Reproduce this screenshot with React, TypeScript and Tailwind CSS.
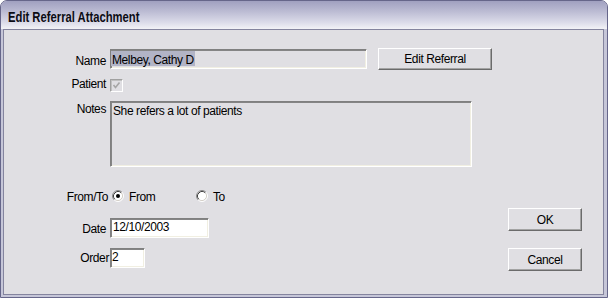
import React from "react";

const sunken =
  "border border-t-[#808080] border-l-[#808080] border-b-white border-r-white shadow-[inset_1px_1px_0_#858585,inset_-1px_-1px_0_#f1efe2]";
const raised =
  "border border-t-white border-l-white border-b-[#6b6b6b] border-r-[#6b6b6b] shadow-[inset_-1px_-1px_0_#a3a3a3] bg-[#e0dfe3] flex items-center justify-center";

function Radio({ checked }: { checked?: boolean }) {
  return (
    <svg width="12" height="12" viewBox="0 0 12 12" className="shrink-0">
      <circle cx="6" cy="6" r="4.6" fill="#ffffff" />
      <path d="M2.11 9.89 A5.5 5.5 0 0 1 9.89 2.11" fill="none" stroke="#8a8a8a" strokeWidth="1" />
      <path d="M9.89 2.11 A5.5 5.5 0 0 1 2.11 9.89" fill="none" stroke="#ffffff" strokeWidth="1" />
      <path d="M2.82 9.18 A4.5 4.5 0 0 1 9.18 2.82" fill="none" stroke="#404040" strokeWidth="1" />
      <path d="M9.18 2.82 A4.5 4.5 0 0 1 2.82 9.18" fill="none" stroke="#d4d0c8" strokeWidth="1" />
      {checked && <circle cx="6" cy="6" r="2" fill="#000000" />}
    </svg>
  );
}

export default function App() {
  return (
    <div className="w-[608px] h-[298px] bg-white font-['Liberation_Sans',Arial,sans-serif] text-[12px] leading-[14px] tracking-[-0.4px] text-black">
      <div className="w-[608px] h-[298px] rounded-t-[7px] border border-[#66668a] bg-[#c6c6d8] flex flex-col overflow-hidden">
        <div className="h-[28px] shrink-0 bg-[linear-gradient(to_bottom,#a0a0c0_0%,#babad2_35%,#dadae8_75%,#f2f2f6_100%)] pl-[7px] pt-[8px]">
          <span className="inline-block origin-left scale-x-[0.75] font-bold text-[15px] leading-[16px] tracking-[0px] text-[#0c0c14] whitespace-nowrap">
            Edit Referral Attachment
          </span>
        </div>
        <div className="flex-1 ml-[2px] mr-[3px] mb-[2px] border border-[#84849e] bg-[#e0dfe3] flex flex-col pt-[18px]">
          {/* Name row */}
          <div className="flex items-start h-[22px]">
            <div className="w-[102px] text-right pt-[6px]">Name</div>
            <div className={`ml-[4px] mt-[1px] w-[257px] h-[20px] ${sunken} bg-[#e0dfe3] pt-[1px]`}>
              <span className="inline-block h-[15px] pt-[2px] pl-[1px] pr-[1px] bg-[#b2b4c6]">Melbey, Cathy D</span>
            </div>
            <div className={`ml-[11px] w-[114px] h-[22px] ${raised}`}>Edit Referral</div>
          </div>
          {/* Patient row */}
          <div className="flex items-start h-[14px] mt-[7px]">
            <div className="w-[102px] text-right">Patient</div>
            <div className="ml-[4px] mt-[2px] w-[13px] h-[13px] border border-t-[#a0a0a0] border-l-[#a0a0a0] border-b-white border-r-white bg-[#e0dfe3] shadow-[inset_1px_1px_0_#c0c0c0]">
              <svg width="11" height="11" viewBox="0 0 11 11">
                <polyline points="2.5,5 4.5,7.5 8.5,2.5" fill="none" stroke="#a6a6a6" strokeWidth="1.6" />
              </svg>
            </div>
          </div>
          {/* Notes row */}
          <div className="flex items-start mt-[10px]">
            <div className="w-[102px] text-right pt-[1px]">Notes</div>
            <div className={`ml-[4px] w-[362px] h-[66px] ${sunken} bg-[#e0dfe3] pt-[2px] pl-[2px]`}>
              She refers a lot of patients
            </div>
          </div>
          {/* bottom */}
          <div className="flex mt-[22px]">
            <div className="flex flex-col">
              <div className="flex items-start h-[14px]">
                <div className="w-[104px] text-right pt-[1px]">From/To</div>
                <div className="ml-[4px] w-[84px] flex items-start">
                  <div className="mt-[1px]">
                    <Radio checked />
                  </div>
                  <span className="ml-[5px] pt-[1px]">From</span>
                </div>
                <div className="flex items-start">
                  <div className="mt-[1px]">
                    <Radio />
                  </div>
                  <span className="ml-[5px] pt-[1px]">To</span>
                </div>
              </div>
              <div className="flex items-start h-[20px] mt-[15px]">
                <div className="w-[102px] text-right pt-[4px]">Date</div>
                <div className={`ml-[4px] w-[99px] h-[20px] ${sunken} bg-white pt-[1px] pl-[2px]`}>12/10/2003</div>
              </div>
              <div className="flex items-start h-[20px] mt-[10px]">
                <div className="w-[105px] text-right pt-[3px]">Order</div>
                <div className={`ml-[1px] w-[35px] h-[20px] ${sunken} bg-white pt-[1px] pl-[1px]`}>2</div>
              </div>
            </div>
            <div className="ml-auto mr-[21px] flex flex-col pt-[19px]">
              <div className={`w-[74px] h-[23px] ${raised}`}>OK</div>
              <div className={`w-[74px] h-[23px] mt-[17px] ${raised}`}>Cancel</div>
            </div>
          </div>
        </div>
      </div>
    </div>
  );
}
